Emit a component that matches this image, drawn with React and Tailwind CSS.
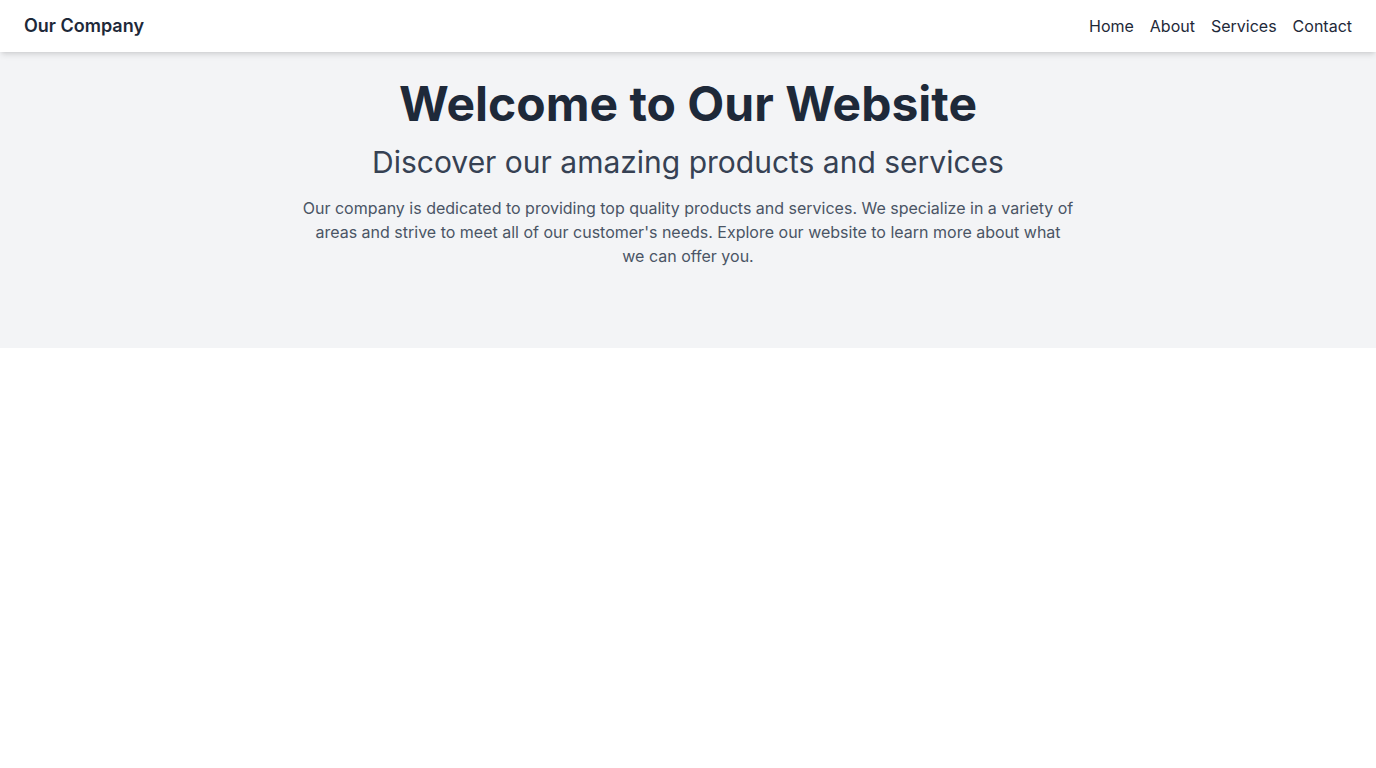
import React from 'react';

function Navbar() {
  const links = ['Home', 'About', 'Services', 'Contact'];
  return (
    <nav className="relative z-10 bg-white shadow-md">
      <div className="flex items-center justify-between px-6 py-3">
        <a href="#" className="text-lg font-semibold text-gray-800">Our Company</a>
        <ul className="flex space-x-4">
          {links.map((link) => (
            <li key={link}>
              <a href="#" className="text-base text-gray-800 hover:text-gray-900">{link}</a>
            </li>
          ))}
        </ul>
      </div>
    </nav>
  );
}

function Hero() {
  return (
    <section className="bg-gray-100 pt-7 pb-20 text-center">
      <h1 className="text-5xl font-bold text-gray-800">Welcome to Our Website</h1>
      <h2 className="mt-4 text-3xl text-gray-700">Discover our amazing products and services</h2>
      <p className="mx-auto mt-4 max-w-[780px] text-base text-gray-600">
        Our company is dedicated to providing top quality products and services. We specialize in a variety of
        areas and strive to meet all of our customer's needs. Explore our website to learn more about what
        <br />
        we can offer you.
      </p>
    </section>
  );
}

export default function App() {
  return (
    <div className="min-h-screen bg-white font-['Inter',sans-serif]">
      <Navbar />
      <Hero />
    </div>
  );
}
